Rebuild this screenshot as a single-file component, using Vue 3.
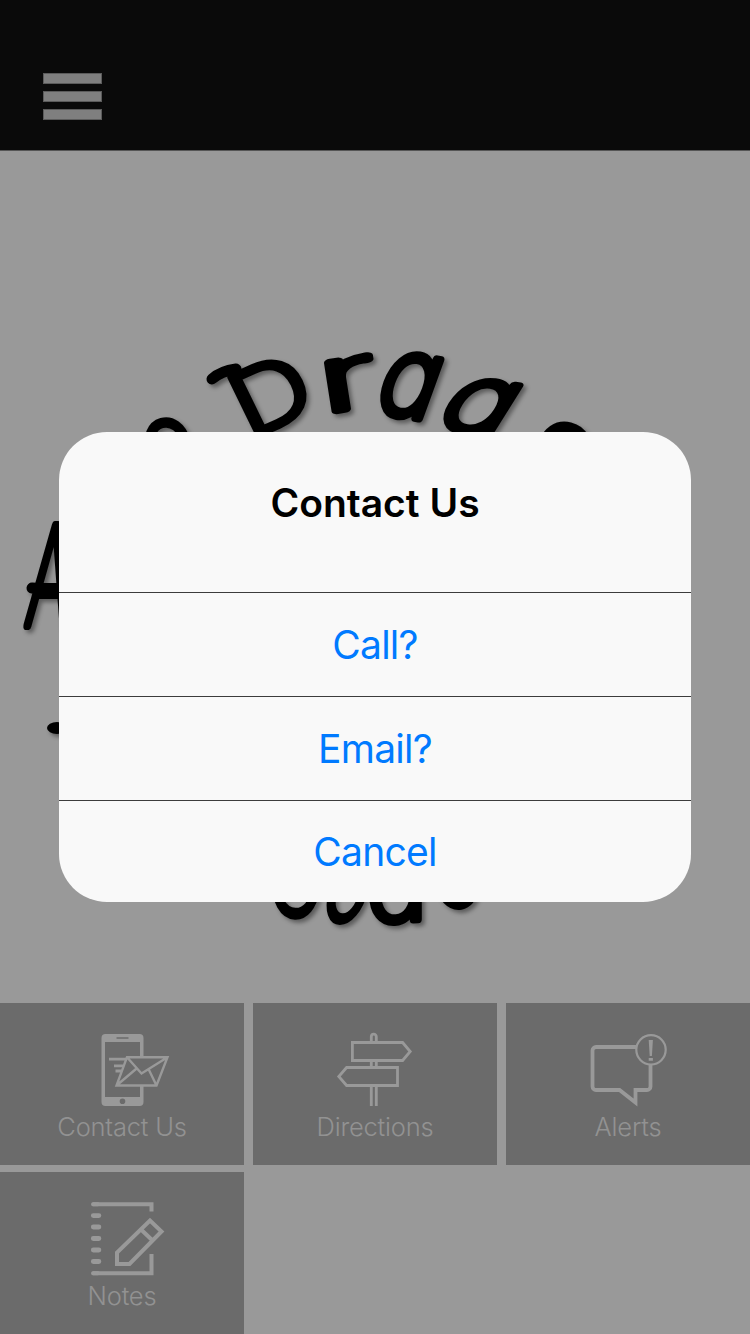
<script setup>
const actions = ['Call?', 'Email?', 'Cancel']
const tiles = [
  { id: 'contact', label: 'Contact Us' },
  { id: 'directions', label: 'Directions' },
  { id: 'alerts', label: 'Alerts' },
  { id: 'notes', label: 'Notes' },
]
// Each letter: character and transform placing its baseline origin
const letters = [
  { c: 'o', t: 'translate(151 476) rotate(-16) scale(.85 .9)' },
  { c: 'D', t: 'translate(249 439) rotate(-24) skewX(2) scale(1.08 .88)' },
  { c: 'r', t: 'translate(323 413) rotate(-9) scale(1.65 .9)' },
  { c: 'a', t: 'translate(371 410) rotate(10) skewX(-10) scale(.98 1.12)' },
  { c: 'g', t: 'translate(431 427) rotate(8) skewX(-24) scale(1.15 .97)' },
  { c: 'o', t: 'translate(530 467) rotate(14) scale(1 .9)' },
  { c: 'A', t: 'translate(24 625) skewX(-6) scale(.66 1.36)' },
  { c: 'C', t: 'translate(268 914) rotate(2) scale(.72 1)' },
  { c: 'o', t: 'translate(320 920) skewX(-14) scale(.72 1)' },
  { c: 'd', t: 'translate(367 923) rotate(-4) skewX(-4) scale(1.02 1)' },
  { c: 'e', t: 'translate(437 909) rotate(-10) scale(.8 1)' },
]
</script>

<template>
  <main class="screen">
    <header class="bar">
      <div class="menu"><i></i><i></i><i></i></div>
    </header>
    <section class="hero"></section>
    <nav class="tiles">
      <div v-for="tile in tiles" :key="tile.id" class="tile">
        <svg v-if="tile.id === 'contact'" class="icon" viewBox="0.500 0 80 76">
          <path fill="currentColor" fill-rule="evenodd" d="M24 2h34a4 4 0 0 1 4 4v64a4 4 0 0 1-4 4H24a4 4 0 0 1-4-4V6a4 4 0 0 1 4-4zM23.500 10v55h35V10zM35 5.200v1.600h12V5.200zM41 66.500a2.800 2.800 0 1 0 0 5.600a2.800 2.800 0 0 0 0-5.600z" />
          <path class="cut" d="M45.500 24.500h42L76 54H34z" />
          <g fill="none" stroke="currentColor">
            <path stroke-width="2.800" d="M27.500 27.200h17M32.500 33.800h9M34 39h6" />
            <path stroke-width="2.400" d="M45.500 25.200H86L75 53.500H35zM45.500 25.200L60 41.500L86 25.200M35 53.500L54.500 37M75 53.500L67 37" />
          </g>
        </svg>
        <svg v-else-if="tile.id === 'directions'" class="icon" viewBox="0 0 80 76">
          <g fill="none" stroke="currentColor" stroke-width="2.800">
            <path d="M36.300 10V4.700a2.500 2.500 0 0 1 5 0V10M36.300 29v5M41.300 29v5M36.300 53v21M41.300 53v21" />
            <path d="M17.400 10.500h50.200L75.200 19.500l-7.600 9h-50.200z" />
            <path d="M62.500 35.500H11.600L3.800 44.500l7.800 9h50.900z" />
          </g>
        </svg>
        <svg v-else-if="tile.id === 'alerts'" class="icon" viewBox="1.500 0 80 76">
          <g fill="none" stroke="currentColor">
            <path stroke-width="3.800" d="M50 15H9.500a3.500 3.500 0 0 0-3.500 3.500v36a3.500 3.500 0 0 0 3.500 3.500H33L49 70.500V58h11.500a3.500 3.500 0 0 0 3.500-3.500V33" />
            <circle cx="64.500" cy="17.800" r="14.700" stroke-width="2.200" />
          </g>
          <path fill="currentColor" d="M62.200 8h4.200l-1 16h-2.200zM62.200 26h4.200v2.800h-4.200z" />
        </svg>
        <svg v-else class="icon" viewBox="1.500 0 80 76">
          <g fill="none" stroke="currentColor" stroke-width="4">
            <path d="M12 3.200h59v7.300M12 72.200h59V53" />
            <path stroke-width="4.800" stroke-linecap="round" d="M12.800 14.600h5.600M12.800 26h5.600M12.800 37.500h5.600M12.800 49h5.600M12.800 60.500h5.600" />
            <path d="M36.500 63V51.500L69.500 19.500L81 30.500L49 63zM60.500 28.500L71.500 39" />
            <path stroke-linecap="round" d="M12.500 3.200h5M12.500 72.200h5" />
          </g>
        </svg>
        <span class="label">{{ tile.label }}</span>
      </div>
    </nav>
    <svg class="logo" viewBox="0 0 750 1334" aria-hidden="true">
      <text v-for="(l, i) in letters" :key="i" :transform="l.t">{{ l.c }}</text>
      <path class="flourish" d="M212 379Q221 371 236 369" />
      <path class="flourish" d="M32 588L64 590" />
      <ellipse cx="57" cy="728" rx="10" ry="6" />
    </svg>
    <div class="dialog">
      <h1>Contact Us</h1>
      <button v-for="a in actions" :key="a" type="button">{{ a }}</button>
    </div>
  </main>
</template>

<style>
body { background: #999; overflow: hidden; }
</style>

<style scoped>
.screen {
  position: relative;
  display: flex;
  flex-direction: column;
  width: 750px;
  height: 1334px;
  background: #999;
  font-family: Inter, "Liberation Sans", sans-serif;
  overflow: hidden;
}
.bar {
  box-sizing: border-box;
  height: 151px;
  padding: 73px 0 0 43px;
  background: #0a0a0a;
  border-bottom: 1px solid #555;
}
.menu {
  display: flex;
  flex-direction: column;
  gap: 7px;
  width: 59px;
}
.menu i {
  box-sizing: border-box;
  height: 11px;
  background: #7f7f7f;
  border: 1px solid #5b5b5b;
}
.hero { flex: 1; }
.tiles {
  display: grid;
  grid-template-columns: repeat(3, 244px);
  grid-auto-rows: 162px;
  gap: 7px 9px;
}
.tile {
  display: flex;
  flex-direction: column;
  align-items: center;
  background: #6b6b6b;
  color: #999;
}
.icon {
  width: 80px;
  height: 76px;
  margin-top: 29px;
  overflow: visible;
}
.cut { fill: #6b6b6b; }
.label {
  margin-top: 3px;
  font-size: 25.5px;
  line-height: 32px;
  font-weight: 350;
  letter-spacing: -0.2px;
  color: #929292;
}
.logo {
  position: absolute;
  inset: 0;
  width: 750px;
  height: 1334px;
  filter: drop-shadow(3px 3px 2px rgba(0, 0, 0, 0.4));
}
.logo text {
  font: 200 100px Inter, sans-serif;
  font-feature-settings: "cv11";
  fill: #000;
  stroke: #000;
  stroke-width: 7.5px;
  stroke-linejoin: round;
}
.flourish {
  fill: none;
  stroke: #000;
  stroke-width: 11px;
  stroke-linecap: round;
}
.dialog {
  position: absolute;
  left: 59px;
  top: 432px;
  display: flex;
  flex-direction: column;
  width: 632px;
  height: 470px;
  border-radius: 48px;
  background: #f9f9f9;
  overflow: hidden;
}
h1 {
  flex: none;
  height: 160px;
  margin: 0;
  font-size: 39px;
  line-height: 142px;
  font-weight: 600;
  text-align: center;
  color: #000;
}
button {
  flex: none;
  box-sizing: border-box;
  height: 104px;
  padding: 0;
  border: 0;
  border-top: 1px solid #3c3c3c;
  background: none;
  font: 400 39px Inter, sans-serif;
  letter-spacing: -0.7px;
  color: #007aff;
}
button:last-child { height: 102px; }
</style>
